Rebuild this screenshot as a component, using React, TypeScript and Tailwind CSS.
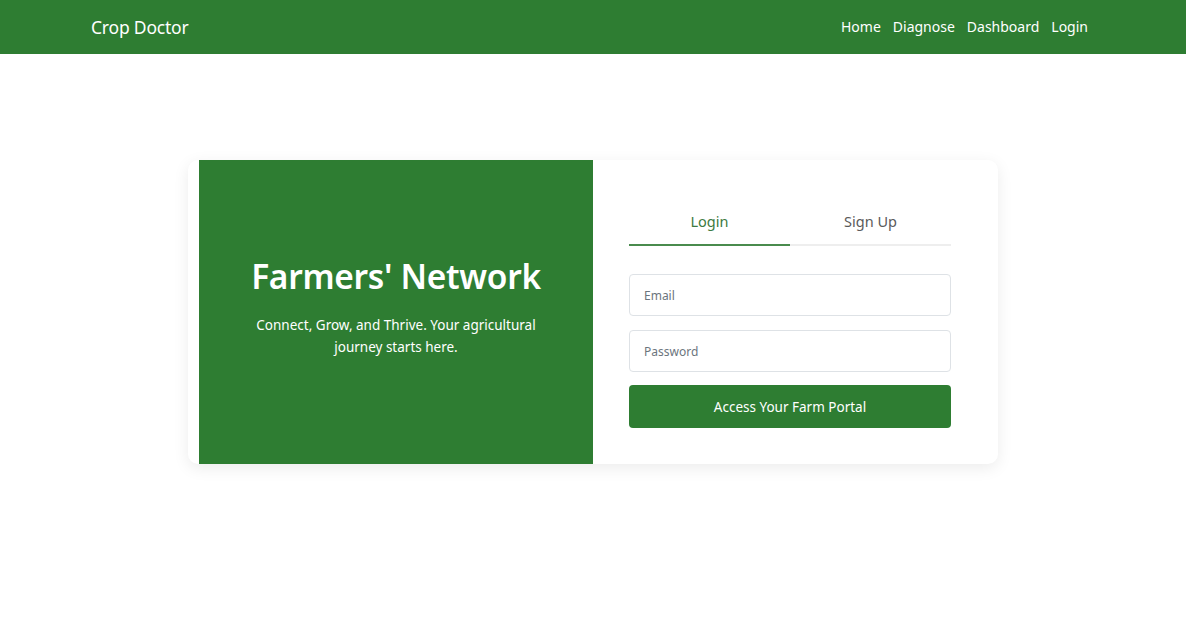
export default function App() {
  const font = { fontFamily: '"Noto Sans", "Open Sans", sans-serif' };
  return (
    <div className="min-h-[623px] bg-white" style={font}>
      <header className="h-[54px] bg-[#2e7d32] flex items-center justify-between pl-[91px] pr-[98px]">
        <a className="text-white text-[17.5px] tracking-[-0.2px]">Crop Doctor</a>
        <nav className="flex items-center gap-[12px] text-[14px] leading-[20px] text-white pb-[1px]">
          <a>Home</a>
          <a>Diagnose</a>
          <a>Dashboard</a>
          <a>Login</a>
        </nav>
      </header>

      <main className="flex justify-center pt-[106px]">
        <div className="w-[810px] h-[304px] flex bg-white rounded-[10px] pl-[11px] shadow-[0_4px_16px_rgba(0,0,0,0.08)]">
          <section className="w-[394px] bg-[#2e7d32] flex flex-col items-center justify-center text-white text-center pb-[12px]">
            <h1 className="text-[33.5px] font-semibold leading-[44px] tracking-[-0.3px]">Farmers' Network</h1>
            <p className="mt-[16px] w-[300px] text-[13.5px] leading-[22px]">
              Connect, Grow, and Thrive. Your agricultural journey starts here.
            </p>
          </section>

          <section className="flex-1 pl-[36px] pr-[47px] pt-[44px]">
            <div className="flex text-[14.5px] leading-[18px]">
              <button className="flex-1 pt-[8px] pb-[14px] text-[#3d7a41] border-b-2 border-[#4a8b4e]">Login</button>
              <button className="flex-1 pt-[8px] pb-[14px] text-[#5a5a5a] border-b-2 border-[#eeeeee]">Sign Up</button>
            </div>
            <div className="mt-[28px] flex flex-col gap-[14px]">
              <input
                placeholder="Email"
                className="h-[42px] w-full rounded-[4px] border border-[#dee2e6] px-[14px] text-[12px] placeholder:text-[#6c757d] outline-none"
              />
              <input
                placeholder="Password"
                type="password"
                className="h-[42px] w-full rounded-[4px] border border-[#dee2e6] px-[14px] text-[12px] placeholder:text-[#6c757d] outline-none"
              />
              <button className="h-[43px] w-full rounded-[4px] bg-[#2e7d32] text-white text-[13.5px] -mt-[1px] pt-[1px]">
                Access Your Farm Portal
              </button>
            </div>
          </section>
        </div>
      </main>
    </div>
  );
}
